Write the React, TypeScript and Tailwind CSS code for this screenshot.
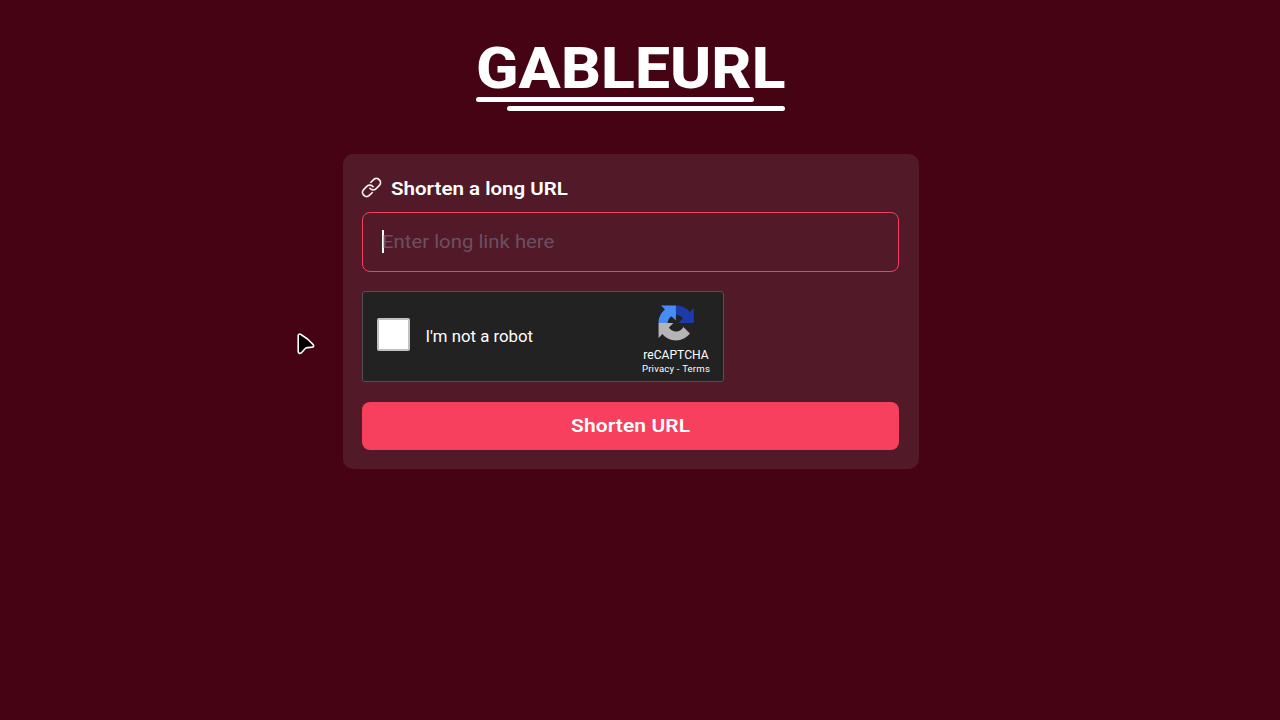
import { GoLink } from "react-icons/go";

function Logo() {
  return (
    <header className="mr-px w-[309px]">
      <h1 className="h-[57px] origin-left scale-x-[1.075] whitespace-nowrap text-[58px] leading-[57px] font-extrabold tracking-[0.1px]">GABLEURL</h1>
      <div className="h-[5px] w-[278px] rounded-full bg-white" />
      <div className="mt-1 ml-auto h-[5px] w-[278px] rounded-full bg-white" />
    </header>
  );
}

function Captcha() {
  return (
    <div className="mt-[19px] flex h-[91px] w-[362px] justify-between rounded-[3px] border border-[#525252] bg-[#222] pl-[14px] font-[Roboto,sans-serif]">
      <div className="flex">
        <div className="mt-[26px] size-[33px] rounded-[2px] border-2 border-[#c1c1c1] bg-white" />
        <span className="mt-[34px] ml-[15.5px] text-[16.8px] leading-5">I'm not a robot</span>
      </div>
      <div className="mr-[12px] flex w-[70px] flex-col items-center whitespace-nowrap">
        <svg className="mt-[12px] h-[38px] w-[38px] shrink-0" viewBox="0 0 64 64" preserveAspectRatio="none">
          <path fill="#1c3aa9" d="M62 31.955a28 28 0 0 0-.04-1.242V6.902l-6.583 6.583C49.989 6.89 41.793 2.678 32.614 2.678h-.75V17.9c.446 0 .79.052 1.044.15 4.577.361 8.544 2.887 10.88 6.553l-7.638 7.352Z" />
          <path fill="#4a8cf5" d="M31.862 2.68c-.418.002-.83.015-1.241.039H6.809l6.583 6.582C6.798 14.69 2.586 22.886 2.586 32.065h15.3c0-4.5 2.7-9.1 6.5-11.6l7.476 7.4Z" />
          <path fill="#b5b5b5" d="M2.588 32.004c.001.418.014.83.038 1.241v23.812l6.583-6.583c5.388 6.594 13.584 10.807 22.763 10.807 9.553 0 18.038-4.561 23.411-11.624l-10.79-10.904a14.3 14.3 0 0 1-4.37 4.907c-1.886 1.471-4.557 2.674-8.251 2.674-.446 0-.79-.052-1.044-.15-4.577-.361-8.543-2.887-10.88-6.553l7.638-7.638Z" />
        </svg>
        <span className="mt-[6px] text-[12.1px] leading-[15px]">reCAPTCHA</span>
        <span className="text-[9.6px] leading-[12px] tracking-[0.18px]">Privacy&nbsp;-&nbsp;Terms</span>
      </div>
    </div>
  );
}

export default function App() {
  return (
    <main className="flex h-screen flex-col items-center overflow-hidden bg-[#450314] pt-10 pr-[18px] font-[Roboto,sans-serif] text-white">
      <Logo />
      <section className="mt-[43px] h-[315px] w-[576px] rounded-[10px] bg-[#521a28] px-[19px] pt-[24px]">
        <label className="flex h-[34px] items-start text-[19.2px] leading-[22px] font-semibold">
          <GoLink className="-mt-[1px] -ml-[1px] size-[21px] shrink-0 stroke-current stroke-[0.4]" />
          <span className="ml-[8.5px] origin-left scale-x-[1.07] tracking-[0px]">Shorten a long URL</span>
        </label>
        <div className="flex h-[60px] w-[537px] items-center rounded-[8px] border border-[#f43f5e] pl-[19px]">
          <span className="-mt-[2px] h-[23px] w-[2px] bg-white" />
          <span className="-ml-[2px] origin-left scale-x-[1.06] text-[19.2px] text-[#6b5063]">Enter long link here</span>
        </div>
        <Captcha />
        <button className="mt-5 h-12 w-[537px] rounded-[8px] bg-[#f6405e] text-[19.2px] font-semibold">
          <span className="inline-block scale-x-[1.09] tracking-[0.1px]">Shorten URL</span>
        </button>
      </section>
      <svg className="absolute top-[331px] left-[296px] h-[26px] w-[21px]" viewBox="0 0 21 26" fill="#000" stroke="#fff" strokeWidth="1.6" strokeLinejoin="round">
        <path d="M2.2 4.6c0-1.5 1.7-2 2.7-1.1 5 2.8 9.5 6.8 12.2 10 1.1 1.5.5 2.7-1.2 2.8-2.5.1-4.7-.2-6.2.9-1.5 1.1-2.900 3.400-4.500 4.600-1.500 1.100-3 .4-3-1.200Z" />
      </svg>
    </main>
  );
}
